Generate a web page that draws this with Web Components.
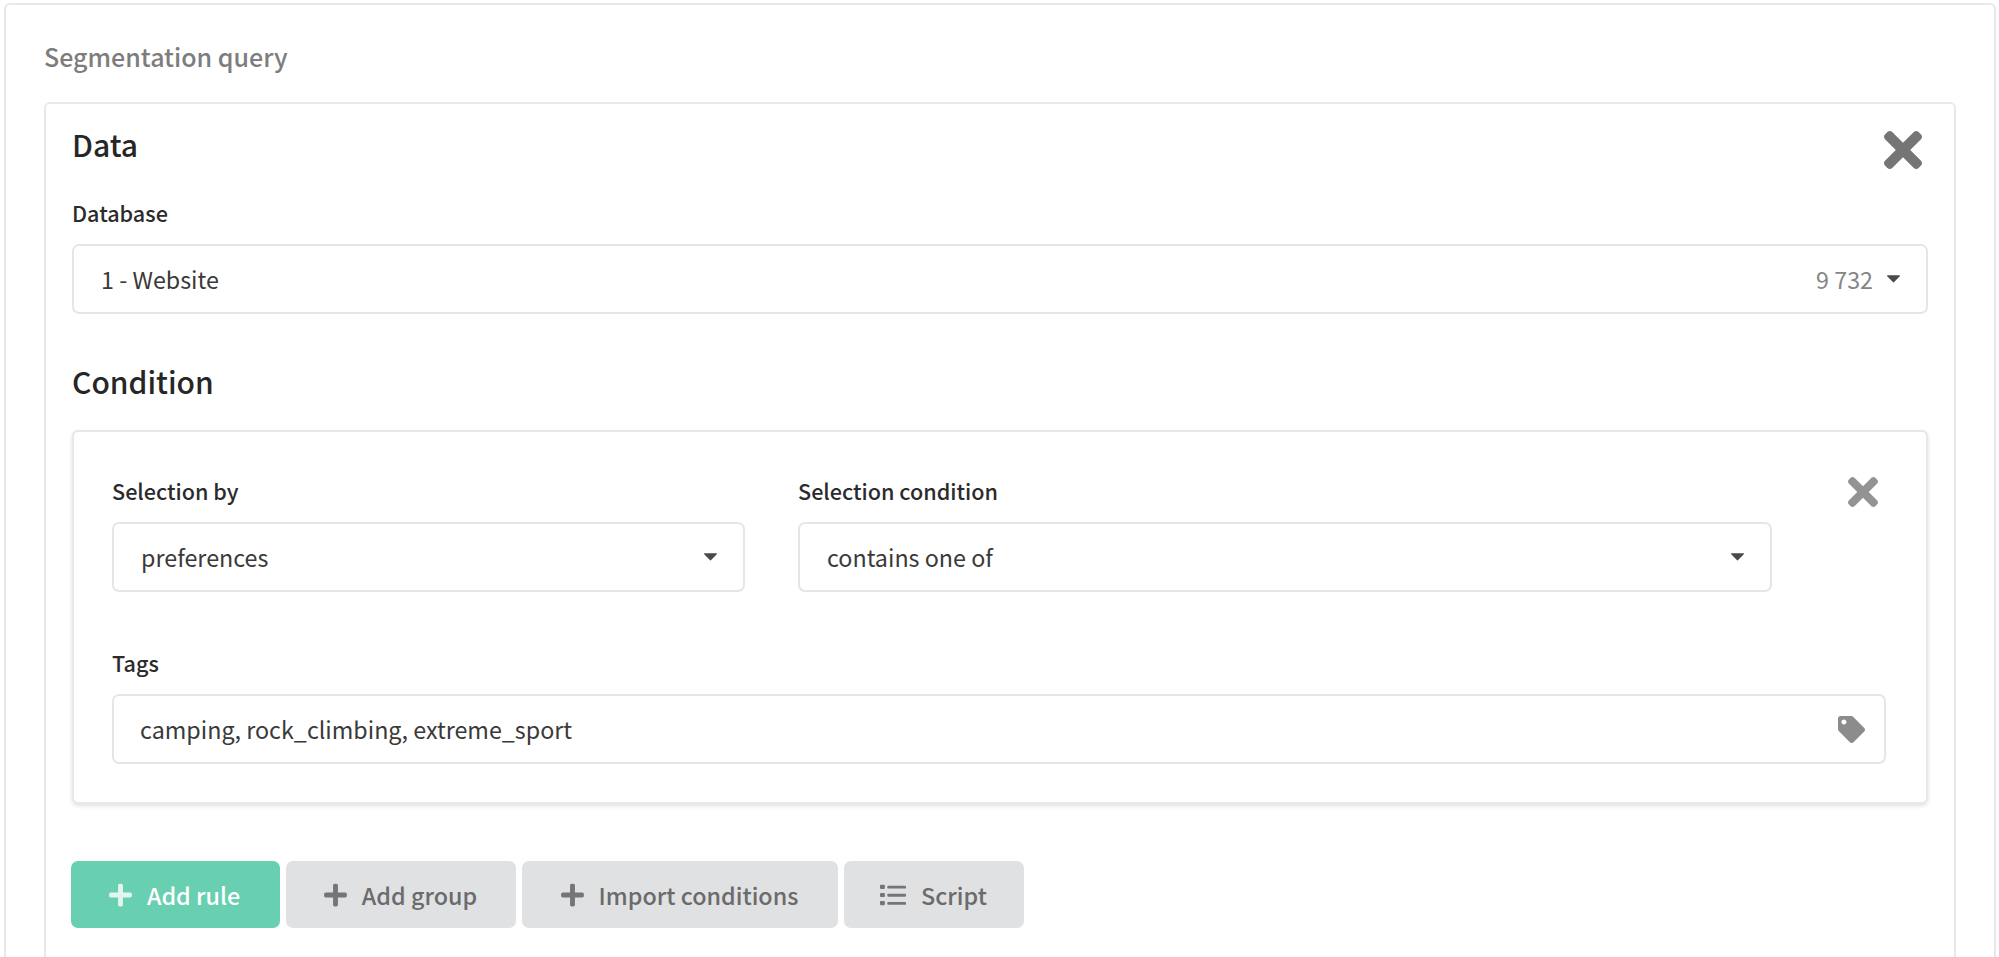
<!DOCTYPE html>
<html lang="en">
<head>
<meta charset="utf-8">
<title>Segmentation query</title>
<style>
  html, body { margin: 0; height: 957px; overflow: hidden; background: #fff; }
  body {
    font-family: "Noto Sans CJK SC", "Noto Sans", sans-serif;
    color: #2b2b2b;
  }
</style>
</head>
<body>
<seg-page heading="Segmentation query">
  <seg-data-card>
    <seg-field label="Database">
      <seg-select value="1 - Website" count="9 732"></seg-select>
    </seg-field>
    <seg-rule slot="rule"></seg-rule>
  </seg-data-card>
</seg-page>

<script>
const ICONS = {
  times: ['0 0 352 512', 'M242.72 256l100.07-100.07c12.28-12.28 12.28-32.19 0-44.48l-22.24-22.24c-12.28-12.28-32.19-12.28-44.48 0L176 189.28 75.93 89.21c-12.28-12.28-32.19-12.28-44.48 0L9.21 111.45c-12.28 12.28-12.28 32.19 0 44.48L109.28 256 9.21 356.07c-12.28 12.28-12.28 32.19 0 44.48l22.24 22.24c12.28 12.28 32.2 12.28 44.48 0L176 322.72l100.07 100.07c12.28 12.28 32.2 12.28 44.48 0l22.24-22.24c12.28-12.28 12.28-32.19 0-44.48L242.72 256z'],
  plus: ['0 0 448 512', 'M416 208H272V64c0-17.67-14.33-32-32-32h-32c-17.67 0-32 14.33-32 32v144H32c-17.67 0-32 14.33-32 32v32c0 17.67 14.33 32 32 32h144v144c0 17.67 14.33 32 32 32h32c17.67 0 32-14.33 32-32V304h144c17.67 0 32-14.33 32-32v-32c0-17.67-14.33-32-32-32z'],
  tag: ['0 0 512 512', 'M0 252.118V48C0 21.49 21.49 0 48 0h204.118a48 48 0 0 1 33.941 14.059l211.882 211.882c18.745 18.745 18.745 49.137 0 67.882L293.823 497.941c-18.745 18.745-49.137 18.745-67.882 0L14.059 286.059A48 48 0 0 1 0 252.118zM112 64c-26.51 0-48 21.49-48 48s21.49 48 48 48 48-21.49 48-48-21.49-48-48-48z'],
  list: ['0 40 512 432', 'M16 56h64c9 0 16 7 16 16v48c0 9-7 16-16 16H16c-9 0-16-7-16-16V72c0-9 7-16 16-16zm0 160h64c9 0 16 7 16 16v48c0 9-7 16-16 16H16c-9 0-16-7-16-16v-48c0-9 7-16 16-16zm0 160h64c9 0 16 7 16 16v48c0 9-7 16-16 16H16c-9 0-16-7-16-16v-48c0-9 7-16 16-16zM160 72h336c9 0 16 7 16 16v24c0 9-7 16-16 16H160c-9 0-16-7-16-16V88c0-9 7-16 16-16zm0 160h336c9 0 16 7 16 16v24c0 9-7 16-16 16H160c-9 0-16-7-16-16v-24c0-9 7-16 16-16zm0 160h336c9 0 16 7 16 16v24c0 9-7 16-16 16H160c-9 0-16-7-16-16v-24c0-9 7-16 16-16z'],
  caret: ['0 0 14 8', 'M0.6 0h12.8c.5 0 .8.6.4 1L7.4 7.6c-.2.3-.6.3-.8 0L.2 1C-.2.6.1 0 .6 0z']
};

function iconSvg(name, w, h, color) {
  const [box, d] = ICONS[name];
  return `<svg width="${w}" height="${h}" viewBox="${box}" aria-hidden="true" style="display:block;flex:none"><path fill="${color}" d="${d}"/></svg>`;
}

class SegPage extends HTMLElement {
  connectedCallback() {
    if (this.shadowRoot) return;
    this.attachShadow({mode: 'open'}).innerHTML = `
      <style>
        :host { display: block; box-sizing: border-box; height: 957px; padding: 3px 3px 0 4px; }
        .panel {
          box-sizing: border-box; height: 100%;
          border: 2px solid #e8e8e8; border-bottom: 0; border-radius: 6px 6px 0 0;
          padding: 33px 38px 0;
        }
        h2 { margin: 0 0 28px; font-size: 25px; line-height: 36px; font-weight: 500; color: #7d7d7d; }
      </style>
      <div class="panel">
        <h2>${this.getAttribute('heading')}</h2>
        <slot></slot>
      </div>`;
  }
}

class SegDataCard extends HTMLElement {
  connectedCallback() {
    if (this.shadowRoot) return;
    this.attachShadow({mode: 'open'}).innerHTML = `
      <style>
        :host {
          display: block; box-sizing: border-box; height: 900px; position: relative;
          border: 2px solid #e8e8e8; border-bottom: 0; border-radius: 6px 6px 0 0;
          padding: 18px 26px 0;
        }
        h3 { margin: 0; font-size: 30px; line-height: 44px; font-weight: 500; color: #262626; }
        .head { display: flex; justify-content: space-between; align-items: flex-start; margin-bottom: 20px; }
        .close { margin: 0 6px 0 0; }
        .cond { margin: 45px 0 27px; }
      </style>
      <div class="head"><h3>Data</h3><div class="close">${iconSvg('times', 38, 56, '#757575')}</div></div>
      <slot></slot>
      <h3 class="cond">Condition</h3>
      <slot name="rule"></slot>
      <seg-actions></seg-actions>`;
  }
}

class SegField extends HTMLElement {
  connectedCallback() {
    if (this.shadowRoot) return;
    this.attachShadow({mode: 'open'}).innerHTML = `
      <style>
        :host { display: block; min-width: 0; }
        label { display: block; font-size: 21.6px; line-height: 30px; font-weight: 500; color: #2b2b2b; margin-bottom: 16px; }
      </style>
      <label>${this.getAttribute('label')}</label>
      <slot></slot>`;
  }
}

class SegSelect extends HTMLElement {
  connectedCallback() {
    if (this.shadowRoot) return;
    const count = this.getAttribute('count');
    const icon = this.getAttribute('icon');
    const right = icon
      ? iconSvg(icon, 27, 27, '#8c8c8c')
      : iconSvg('caret', 13, 8, '#4a4a4a');
    this.attachShadow({mode: 'open'}).innerHTML = `
      <style>
        :host {
          display: flex; align-items: center; box-sizing: border-box; height: 70px;
          border: 2px solid #e6e6e6; border-radius: 7px; background: #fff;
          padding: 0 ${icon ? 19 : 26}px 0 ${icon ? 26 : 27}px; font-size: 23.3px; color: #3a3a3a;
        }
        .v { flex: 1; white-space: nowrap; }
        .c { color: #858585; margin-right: 14px; }
      </style>
      <span class="v">${this.getAttribute('value')}</span>
      ${count ? `<span class="c">${count}</span>` : ''}
      ${right}`;
  }
}

class SegRule extends HTMLElement {
  connectedCallback() {
    if (this.shadowRoot) return;
    this.attachShadow({mode: 'open'}).innerHTML = `
      <style>
        :host {
          display: block; box-sizing: border-box; height: 374px;
          border: 2px solid #e8e8e8; border-radius: 6px; background: #fff;
          box-shadow: 0 2px 4px rgba(0,0,0,.12);
          padding: 44px 40px 0 38px;
        }
        .top { display: grid; grid-template-columns: 633px 974px 1fr; column-gap: 53px; }
        .close { justify-self: end; margin: -6px 8px 0 0; }
        .tags { margin-top: 56px; }
      </style>
      <div class="top">
        <seg-field label="Selection by"><seg-select value="preferences"></seg-select></seg-field>
        <seg-field label="Selection condition"><seg-select value="contains one of"></seg-select></seg-field>
        <div class="close">${iconSvg('times', 30, 44, '#939393')}</div>
      </div>
      <seg-field class="tags" label="Tags"><seg-select value="camping, rock_climbing, extreme_sport" icon="tag"></seg-select></seg-field>`;
  }
}

class SegActions extends HTMLElement {
  connectedCallback() {
    if (this.shadowRoot) return;
    this.attachShadow({mode: 'open'}).innerHTML = `
      <style>
        :host { display: flex; gap: 6px; margin: 57px 0 0 -1px; }
      </style>
      <seg-button primary icon="plus" label="Add rule" w="209"></seg-button>
      <seg-button icon="plus" label="Add group" w="230"></seg-button>
      <seg-button icon="plus" label="Import conditions" w="316"></seg-button>
      <seg-button icon="list" label="Script" w="180"></seg-button>`;
  }
}

class SegButton extends HTMLElement {
  connectedCallback() {
    if (this.shadowRoot) return;
    const primary = this.hasAttribute('primary');
    const name = this.getAttribute('icon');
    const size = name === 'list' ? [26, 22] : [23, 26];
    this.attachShadow({mode: 'open'}).innerHTML = `
      <style>
        :host {
          display: flex; align-items: center; justify-content: center; gap: 15px;
          box-sizing: border-box; height: 67px; width: ${this.getAttribute('w')}px;
          padding-right: ${primary ? 2 : 1}px;
          border-radius: 7px; font-size: 23.3px; font-weight: 500;
          background: ${primary ? '#68cfb0' : '#e0e1e3'};
          color: ${primary ? '#fff' : '#6b6b6b'};
        }
      </style>
      ${iconSvg(name, size[0], size[1], primary ? '#e2f5ef' : '#757575')}
      <span>${this.getAttribute('label')}</span>`;
  }
}

customElements.define('seg-page', SegPage);
customElements.define('seg-data-card', SegDataCard);
customElements.define('seg-field', SegField);
customElements.define('seg-select', SegSelect);
customElements.define('seg-rule', SegRule);
customElements.define('seg-actions', SegActions);
customElements.define('seg-button', SegButton);
</script>
</body>
</html>
